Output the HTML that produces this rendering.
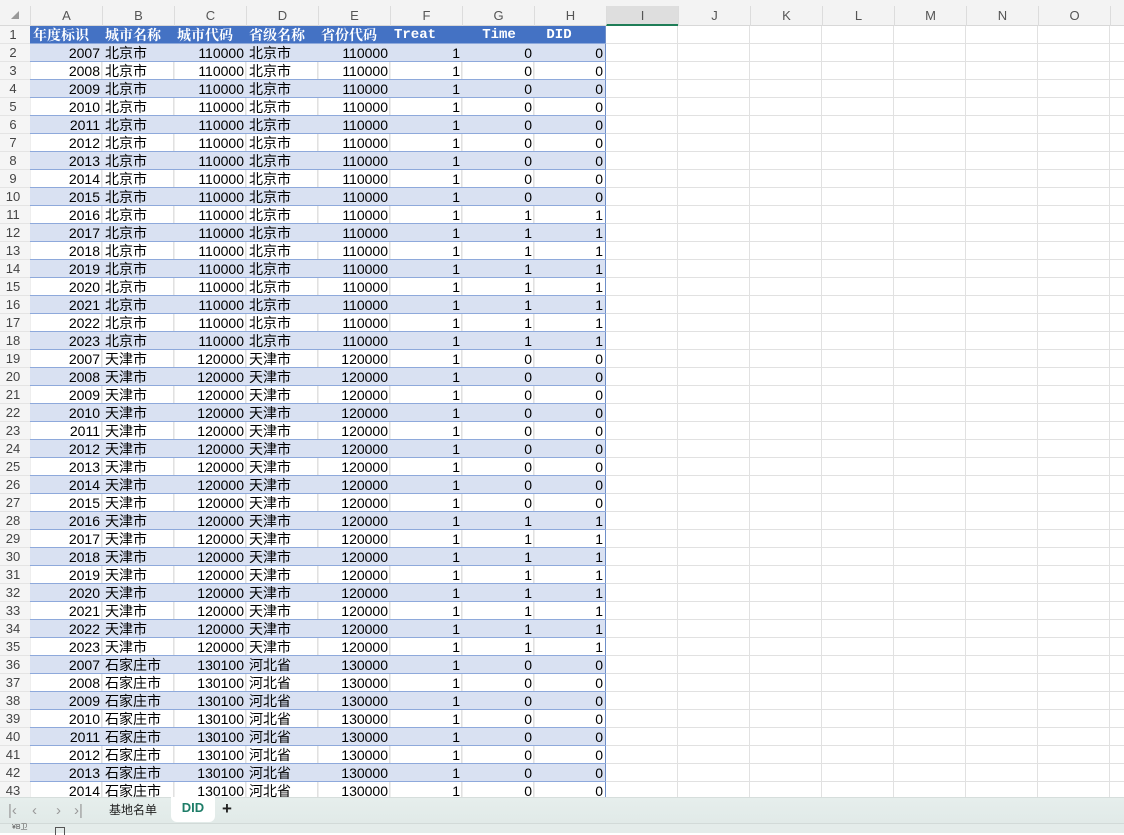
<!DOCTYPE html>
<html><head><meta charset="utf-8"><style>
*{margin:0;padding:0;box-sizing:border-box}
body{width:1124px;height:833px;overflow:hidden;position:relative;background:#fff;font-family:"Liberation Sans","Noto Sans CJK SC",sans-serif;font-size:14px;color:#000}
#grid{position:absolute;left:0;top:26px;width:1124px;height:771px;
background-image:linear-gradient(to right,#e1e1e1 1px,transparent 1px),linear-gradient(to bottom,#e1e1e1 1px,transparent 1px);
background-size:72px 18px;background-position:29px 17px}
#ch{position:absolute;left:0;top:0;width:1124px;height:26px;background:#f3f3f3;border-bottom:1px solid #d8d8d8}
#ch div{position:absolute;top:6px;height:20px;width:72px;text-align:center;color:#555;font-size:13px;line-height:19px;border-left:1px solid #dcdcdc}
#ch .sel{background:#dedede;border-bottom:2px solid #1e7d57}
#rh{position:absolute;left:0;top:26px;width:30px;height:771px;background:#f5f5f5;border-right:1px solid #d8d8d8}
#t{position:absolute;left:0;top:26px;width:606px}
.r{display:grid;grid-template-columns:30px repeat(8,72px);height:18px;line-height:18px;border-bottom:1px solid #8ea9db}
.r span{padding:0 2px;text-align:right;white-space:nowrap;overflow:hidden}
.r span:first-child{text-align:center;color:#444;background:#f5f5f5;padding:0 4px 0 0;border-bottom:1px solid #e4e4e4;margin-bottom:-1px;font-size:13px}
.r span:nth-child(3),.r span:nth-child(5){text-align:left}
.r span:nth-child(9){border-right:1px solid #6f8fc8}
.r span:nth-child(n+2){border-left:1px solid #eeeeee}
.b span:nth-child(n+2){background:#d9e1f2;border-left-color:#d9e1f2}
.h span:nth-child(n+2){background:#4472c4;color:#fff;font-weight:bold;text-align:left;border-left-color:#4472c4;font-family:"Noto Serif CJK SC","Liberation Serif",serif;font-size:14px;line-height:18px}
.h span.m{font-family:"Liberation Mono",monospace;font-size:14px;padding-left:3px}
#tabs{position:absolute;left:0;top:797px;width:1124px;height:26px;background:linear-gradient(#e6eeec,#e1eae8);border-top:1px solid #d6dedc}
#tabs .n{position:absolute;top:4px;color:#999;font-size:15px}
#tabs .tab{position:absolute;top:3px;font-size:12px;color:#222}
#tabs .act{position:absolute;left:171px;top:-1px;width:44px;height:25px;background:#fff;border-radius:0 0 6px 6px;color:#1e7d68;font-weight:bold;font-size:13px;text-align:center;line-height:22px}
#st{position:absolute;left:0;top:823px;width:1124px;height:10px;background:#e4ecea;border-top:1px solid #d2dad8}
</style></head><body>
<div id="grid"></div>
<div id="ch">
<div style="left:0;width:30px;border:0;color:#999;font-size:8px">◢</div>
<div style="left:30px">A</div><div style="left:102px">B</div><div style="left:174px">C</div><div style="left:246px">D</div><div style="left:318px">E</div><div style="left:390px">F</div><div style="left:462px">G</div><div style="left:534px">H</div><div class="sel" style="left:606px">I</div><div style="left:678px">J</div><div style="left:750px">K</div><div style="left:822px">L</div><div style="left:894px">M</div><div style="left:966px">N</div><div style="left:1038px">O</div><div style="left:1110px"></div>
</div>
<div id="rh"></div>
<div id="t">
<div class="r h"><span style="background:#f5f5f5;color:#444;font-weight:normal;font-family:'Liberation Sans';font-size:13px;text-align:center">1</span><span>年度标识</span><span>城市名称</span><span>城市代码</span><span>省级名称</span><span>省份代码</span><span class="m">Treat</span><span class="m" style="text-align:center">Time</span><span class="m">&nbsp;DID</span></div>
<div class="r b"><span>2</span><span>2007</span><span>北京市</span><span>110000</span><span>北京市</span><span>110000</span><span>1</span><span>0</span><span>0</span></div>
<div class="r"><span>3</span><span>2008</span><span>北京市</span><span>110000</span><span>北京市</span><span>110000</span><span>1</span><span>0</span><span>0</span></div>
<div class="r b"><span>4</span><span>2009</span><span>北京市</span><span>110000</span><span>北京市</span><span>110000</span><span>1</span><span>0</span><span>0</span></div>
<div class="r"><span>5</span><span>2010</span><span>北京市</span><span>110000</span><span>北京市</span><span>110000</span><span>1</span><span>0</span><span>0</span></div>
<div class="r b"><span>6</span><span>2011</span><span>北京市</span><span>110000</span><span>北京市</span><span>110000</span><span>1</span><span>0</span><span>0</span></div>
<div class="r"><span>7</span><span>2012</span><span>北京市</span><span>110000</span><span>北京市</span><span>110000</span><span>1</span><span>0</span><span>0</span></div>
<div class="r b"><span>8</span><span>2013</span><span>北京市</span><span>110000</span><span>北京市</span><span>110000</span><span>1</span><span>0</span><span>0</span></div>
<div class="r"><span>9</span><span>2014</span><span>北京市</span><span>110000</span><span>北京市</span><span>110000</span><span>1</span><span>0</span><span>0</span></div>
<div class="r b"><span>10</span><span>2015</span><span>北京市</span><span>110000</span><span>北京市</span><span>110000</span><span>1</span><span>0</span><span>0</span></div>
<div class="r"><span>11</span><span>2016</span><span>北京市</span><span>110000</span><span>北京市</span><span>110000</span><span>1</span><span>1</span><span>1</span></div>
<div class="r b"><span>12</span><span>2017</span><span>北京市</span><span>110000</span><span>北京市</span><span>110000</span><span>1</span><span>1</span><span>1</span></div>
<div class="r"><span>13</span><span>2018</span><span>北京市</span><span>110000</span><span>北京市</span><span>110000</span><span>1</span><span>1</span><span>1</span></div>
<div class="r b"><span>14</span><span>2019</span><span>北京市</span><span>110000</span><span>北京市</span><span>110000</span><span>1</span><span>1</span><span>1</span></div>
<div class="r"><span>15</span><span>2020</span><span>北京市</span><span>110000</span><span>北京市</span><span>110000</span><span>1</span><span>1</span><span>1</span></div>
<div class="r b"><span>16</span><span>2021</span><span>北京市</span><span>110000</span><span>北京市</span><span>110000</span><span>1</span><span>1</span><span>1</span></div>
<div class="r"><span>17</span><span>2022</span><span>北京市</span><span>110000</span><span>北京市</span><span>110000</span><span>1</span><span>1</span><span>1</span></div>
<div class="r b"><span>18</span><span>2023</span><span>北京市</span><span>110000</span><span>北京市</span><span>110000</span><span>1</span><span>1</span><span>1</span></div>
<div class="r"><span>19</span><span>2007</span><span>天津市</span><span>120000</span><span>天津市</span><span>120000</span><span>1</span><span>0</span><span>0</span></div>
<div class="r b"><span>20</span><span>2008</span><span>天津市</span><span>120000</span><span>天津市</span><span>120000</span><span>1</span><span>0</span><span>0</span></div>
<div class="r"><span>21</span><span>2009</span><span>天津市</span><span>120000</span><span>天津市</span><span>120000</span><span>1</span><span>0</span><span>0</span></div>
<div class="r b"><span>22</span><span>2010</span><span>天津市</span><span>120000</span><span>天津市</span><span>120000</span><span>1</span><span>0</span><span>0</span></div>
<div class="r"><span>23</span><span>2011</span><span>天津市</span><span>120000</span><span>天津市</span><span>120000</span><span>1</span><span>0</span><span>0</span></div>
<div class="r b"><span>24</span><span>2012</span><span>天津市</span><span>120000</span><span>天津市</span><span>120000</span><span>1</span><span>0</span><span>0</span></div>
<div class="r"><span>25</span><span>2013</span><span>天津市</span><span>120000</span><span>天津市</span><span>120000</span><span>1</span><span>0</span><span>0</span></div>
<div class="r b"><span>26</span><span>2014</span><span>天津市</span><span>120000</span><span>天津市</span><span>120000</span><span>1</span><span>0</span><span>0</span></div>
<div class="r"><span>27</span><span>2015</span><span>天津市</span><span>120000</span><span>天津市</span><span>120000</span><span>1</span><span>0</span><span>0</span></div>
<div class="r b"><span>28</span><span>2016</span><span>天津市</span><span>120000</span><span>天津市</span><span>120000</span><span>1</span><span>1</span><span>1</span></div>
<div class="r"><span>29</span><span>2017</span><span>天津市</span><span>120000</span><span>天津市</span><span>120000</span><span>1</span><span>1</span><span>1</span></div>
<div class="r b"><span>30</span><span>2018</span><span>天津市</span><span>120000</span><span>天津市</span><span>120000</span><span>1</span><span>1</span><span>1</span></div>
<div class="r"><span>31</span><span>2019</span><span>天津市</span><span>120000</span><span>天津市</span><span>120000</span><span>1</span><span>1</span><span>1</span></div>
<div class="r b"><span>32</span><span>2020</span><span>天津市</span><span>120000</span><span>天津市</span><span>120000</span><span>1</span><span>1</span><span>1</span></div>
<div class="r"><span>33</span><span>2021</span><span>天津市</span><span>120000</span><span>天津市</span><span>120000</span><span>1</span><span>1</span><span>1</span></div>
<div class="r b"><span>34</span><span>2022</span><span>天津市</span><span>120000</span><span>天津市</span><span>120000</span><span>1</span><span>1</span><span>1</span></div>
<div class="r"><span>35</span><span>2023</span><span>天津市</span><span>120000</span><span>天津市</span><span>120000</span><span>1</span><span>1</span><span>1</span></div>
<div class="r b"><span>36</span><span>2007</span><span>石家庄市</span><span>130100</span><span>河北省</span><span>130000</span><span>1</span><span>0</span><span>0</span></div>
<div class="r"><span>37</span><span>2008</span><span>石家庄市</span><span>130100</span><span>河北省</span><span>130000</span><span>1</span><span>0</span><span>0</span></div>
<div class="r b"><span>38</span><span>2009</span><span>石家庄市</span><span>130100</span><span>河北省</span><span>130000</span><span>1</span><span>0</span><span>0</span></div>
<div class="r"><span>39</span><span>2010</span><span>石家庄市</span><span>130100</span><span>河北省</span><span>130000</span><span>1</span><span>0</span><span>0</span></div>
<div class="r b"><span>40</span><span>2011</span><span>石家庄市</span><span>130100</span><span>河北省</span><span>130000</span><span>1</span><span>0</span><span>0</span></div>
<div class="r"><span>41</span><span>2012</span><span>石家庄市</span><span>130100</span><span>河北省</span><span>130000</span><span>1</span><span>0</span><span>0</span></div>
<div class="r b"><span>42</span><span>2013</span><span>石家庄市</span><span>130100</span><span>河北省</span><span>130000</span><span>1</span><span>0</span><span>0</span></div>
<div class="r"><span>43</span><span>2014</span><span>石家庄市</span><span>130100</span><span>河北省</span><span>130000</span><span>1</span><span>0</span><span>0</span></div>
</div>
<div id="tabs">
<span class="n" style="left:8px">|&lsaquo;</span><span class="n" style="left:32px">&lsaquo;</span><span class="n" style="left:56px">&rsaquo;</span><span class="n" style="left:74px">&rsaquo;|</span>
<span class="tab" style="left:109px">基地名单</span>
<div class="act">DID</div>
<span class="tab" style="left:222px;font-size:17px;top:1px;font-weight:bold">+</span>
</div>
<div id="st"><span style="position:absolute;left:12px;top:0;font-size:7px;color:#555;line-height:8px">¥B卫</span><span style="position:absolute;left:55px;top:3px;width:10px;height:8px;border:1px solid #555;border-bottom:0"></span></div>
</body></html>
